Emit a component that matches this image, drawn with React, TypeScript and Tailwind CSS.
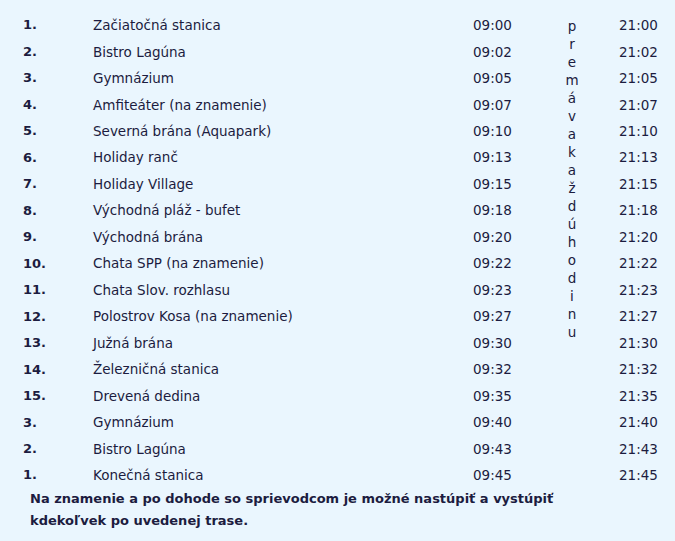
import React from "react";

const rows: [string, string, string, string][] = [
  ["1.", "Začiatočná stanica", "09:00", "21:00"],
  ["2.", "Bistro Lagúna", "09:02", "21:02"],
  ["3.", "Gymnázium", "09:05", "21:05"],
  ["4.", "Amfiteáter (na znamenie)", "09:07", "21:07"],
  ["5.", "Severná brána (Aquapark)", "09:10", "21:10"],
  ["6.", "Holiday ranč", "09:13", "21:13"],
  ["7.", "Holiday Village", "09:15", "21:15"],
  ["8.", "Východná pláž - bufet", "09:18", "21:18"],
  ["9.", "Východná brána", "09:20", "21:20"],
  ["10.", "Chata SPP (na znamenie)", "09:22", "21:22"],
  ["11.", "Chata Slov. rozhlasu", "09:23", "21:23"],
  ["12.", "Polostrov Kosa (na znamenie)", "09:27", "21:27"],
  ["13.", "Južná brána", "09:30", "21:30"],
  ["14.", "Železničná stanica", "09:32", "21:32"],
  ["15.", "Drevená dedina", "09:35", "21:35"],
  ["3.", "Gymnázium", "09:40", "21:40"],
  ["2.", "Bistro Lagúna", "09:43", "21:43"],
  ["1.", "Konečná stanica", "09:45", "21:45"],
];

const vertical = "premávakaždúhodinu".split("");

export default function App() {
  return (
    <div
      className="w-[675px] h-[541px] bg-[#eaf6fe] text-[#1c1c40] text-[13.5px] overflow-hidden"
      style={{ fontFamily: '"DejaVu Sans", Verdana, sans-serif' }}
    >
      <div className="pt-[12px] pl-[23px]">
        <div className="grid grid-cols-[70px_380px_60px_78px_1fr] auto-rows-[26.47px]">
          {rows.map((r, i) => (
            <React.Fragment key={i}>
              <div
                className="col-start-1 flex items-center font-bold text-[13px]"
                style={{ gridRowStart: i + 1 }}
              >
                {r[0]}
              </div>
              <div className="col-start-2 flex items-center" style={{ gridRowStart: i + 1 }}>
                {r[1]}
              </div>
              <div className="col-start-3 flex items-center" style={{ gridRowStart: i + 1 }}>
                {r[2]}
              </div>
              <div className="col-start-5 flex items-center pl-[8px]" style={{ gridRowStart: i + 1 }}>
                {r[3]}
              </div>
            </React.Fragment>
          ))}
          <div className="col-start-4 row-start-1 row-span-[14] flex flex-col items-center pt-[5px]">
            {vertical.map((c, i) => (
              <span key={i} className="block h-[18px] leading-[18px]">
                {c}
              </span>
            ))}
          </div>
        </div>
        <p className="pl-[7px] font-bold text-[13px] leading-[22px]">
          Na znamenie a po dohode so sprievodcom je možné nastúpiť a vystúpiť
          <br />
          kdekoľvek po uvedenej trase.
        </p>
      </div>
    </div>
  );
}
